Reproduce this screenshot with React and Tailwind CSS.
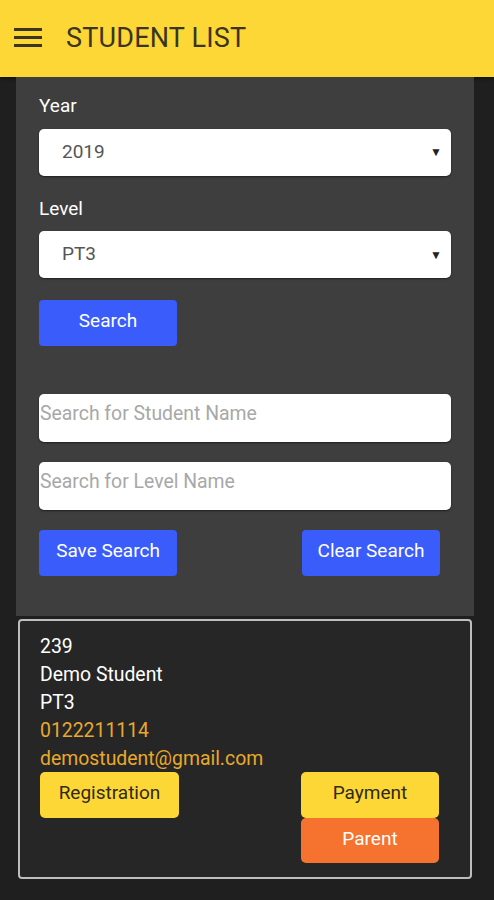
import React from "react";

const font = { fontFamily: "Roboto, 'Noto Sans', sans-serif" };

const SelectBox = ({ value }) => (
  <div className="flex h-[47px] w-[412px] items-center justify-between rounded-[5px] bg-white pl-[23px] pr-[9px] shadow-[0_1px_2px_rgba(0,0,0,0.5)]">
    <span className="text-[19px] text-[#555]">{value}</span>
    <span className="text-[12px] text-[#222]">▼</span>
  </div>
);

const SearchInput = ({ placeholder }) => (
  <div className="flex h-[48px] w-[412px] items-center rounded-[5px] bg-white pb-[8px] pl-[1px] shadow-[0_1px_2px_rgba(0,0,0,0.5)]">
    <span className="text-[19.4px] text-[#a8a8a8]">{placeholder}</span>
  </div>
);

const BlueButton = ({ label }) => (
  <button className="flex h-[46px] w-[138px] items-center justify-center rounded-[4px] bg-[#3a5cfb] pb-[3px] text-[19px] text-white">
    {label}
  </button>
);

const App = () => {
  return (
    <div className="min-h-[900px] w-[494px] bg-[#1f1f1f]" style={font}>
      <div className="flex h-[77px] items-center gap-[24px] bg-[#fdd735] pl-[14px] shadow-[0_2px_3px_rgba(0,0,0,0.4)]">
        <svg width="28" height="20" viewBox="0 0 28 20" className="mt-[-1px]">
          <rect x="0" y="0" width="28" height="3" fill="#3a3520" />
          <rect x="0" y="8" width="28" height="3" fill="#3a3520" />
          <rect x="0" y="16" width="28" height="3" fill="#3a3520" />
        </svg>
        <h1 className="text-[27px] tracking-[0.2px] text-[#3a3520]">STUDENT LIST</h1>
      </div>

      <div className="mx-[16px] w-[458px] bg-[#3e3e3e] pb-[40px] pl-[23px] pt-[15px]">
        <div className="text-[19px] text-white">Year</div>
        <div className="mt-[8px]">
          <SelectBox value="2019" />
        </div>
        <div className="mt-[19px] text-[19px] text-white">Level</div>
        <div className="mt-[8px]">
          <SelectBox value="PT3" />
        </div>
        <div className="mt-[22px]">
          <BlueButton label="Search" />
        </div>

        <div className="mt-[48px] flex flex-col gap-[20px]">
          <SearchInput placeholder="Search for Student Name" />
          <SearchInput placeholder="Search for Level Name" />
        </div>

        <div className="mt-[20px] flex w-[401px] justify-between">
          <BlueButton label="Save Search" />
          <BlueButton label="Clear Search" />
        </div>
      </div>

      <div className="mx-[18px] mt-[3px] h-[260px] w-[454px] rounded-[4px] border-2 border-[#bdbdbd] bg-[#262626] pl-[20px] pt-[12px]">
        <div className="flex flex-col text-[19.4px] leading-[28px]">
          <span className="text-white">239</span>
          <span className="text-white">Demo Student</span>
          <span className="text-white">PT3</span>
          <span className="text-[#e8a92c]">0122211114</span>
          <span className="text-[#e8a92c]">demostudent@gmail.com</span>
        </div>
        <div className="mt-[-1px] flex w-[399px] justify-between">
          <button className="flex h-[46px] w-[139px] items-center justify-center rounded-[5px] bg-[#fdd735] pb-[3px] text-[19px] text-[#2f2a1a]">
            Registration
          </button>
          <div className="flex flex-col">
            <button className="flex h-[46px] w-[138px] items-center justify-center rounded-[5px] bg-[#fdd735] pb-[3px] text-[19px] text-[#2f2a1a]">
              Payment
            </button>
            <button className="flex h-[45px] w-[138px] items-center justify-center rounded-[5px] bg-[#f6732f] pb-[3px] text-[19px] text-white">
              Parent
            </button>
          </div>
        </div>
      </div>
    </div>
  );
};

export default App;
